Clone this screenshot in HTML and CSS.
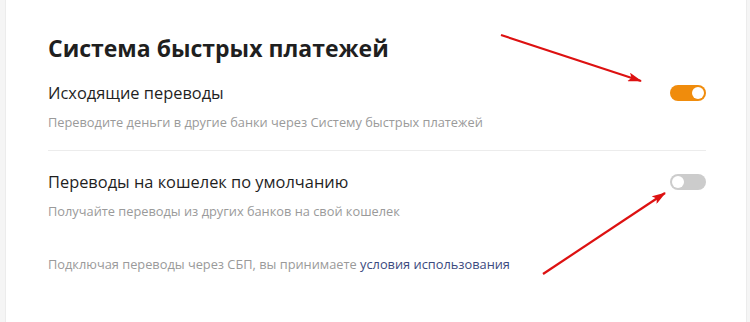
FILE: index.html
```html
<!DOCTYPE html>
<html lang="ru">
<head>
    <meta charset="UTF-8">
    <meta name="viewport" content="width=device-width, initial-scale=1.0">
    <title>Система быстрых платежей</title>
    <link rel="stylesheet" href="styles.css">
</head>
<body>
    <div class="card">
        <h1>Система быстрых платежей</h1>

        <div class="setting">
            <div class="setting-head">
                <span class="setting-title">Исходящие переводы</span>
                <span class="toggle on"><span class="knob"></span></span>
            </div>
            <p class="setting-note">Переводите деньги в другие банки через Систему быстрых платежей</p>
        </div>

        <div class="setting">
            <div class="setting-head">
                <span class="setting-title">Переводы на кошелек по умолчанию</span>
                <span class="toggle"><span class="knob"></span></span>
            </div>
            <p class="setting-note">Получайте переводы из других банков на свой кошелек</p>
        </div>

        <p class="terms">Подключая переводы через СБП, вы принимаете <a href="#">условия использования</a></p>

        <!-- red annotation arrows drawn over the screenshot -->
        <svg class="arrows" width="750" height="322" viewBox="0 0 750 322">
            <defs>
                <marker id="head" markerWidth="14" markerHeight="9" refX="13" refY="4.5" orient="auto" markerUnits="userSpaceOnUse">
                    <path d="M0,0 L14,4.5 L0,9 L3,4.5 Z" fill="#dd1111"/>
                </marker>
            </defs>
            <line x1="501" y1="35" x2="641" y2="81" stroke="#dd1111" stroke-width="2.2" marker-end="url(#head)"/>
            <line x1="543" y1="274" x2="665" y2="193" stroke="#dd1111" stroke-width="2.2" marker-end="url(#head)"/>
        </svg>
    </div>
</body>
</html>
```

FILE: styles.css
```css
:root {
    --text: #1f1f1f;
    --muted: #9a9a9a;
    --line: #ececec;
    --accent: #f08c0c;
    --link: #3b4a7e;
}

* {
    box-sizing: border-box;
}

body {
    margin: 0;
    height: 322px;
    overflow: hidden;
    background: #f5f5f5;
    font-family: 'Open Sans', Arial, sans-serif;
    color: var(--text);
}

.card {
    position: relative;
    margin-left: 5px;
    width: 742px;
    height: 322px;
    padding: 33px 40px 0 42px;
    background: #fff;
    border-left: 1px solid var(--line);
    border-right: 1px solid var(--line);
}

h1 {
    margin: 0 0 18px;
    font-size: 23px;
    line-height: 30px;
    font-weight: 700;
}

.setting {
    padding-bottom: 19px;
}

.setting + .setting {
    border-top: 1px solid var(--line);
    padding-top: 19px;
}

.setting-head {
    display: flex;
    align-items: center;
    justify-content: space-between;
    height: 24px;
}

.setting-title {
    font-size: 16.4px;
    line-height: 24px;
}

.setting-note {
    margin: 8px 0 0;
    font-size: 12.8px;
    line-height: 18px;
    color: var(--muted);
}

.toggle {
    display: flex;
    align-items: center;
    width: 36px;
    height: 16px;
    padding: 2px;
    border-radius: 8px;
    background: #cccccc;
}

.toggle .knob {
    width: 12px;
    height: 12px;
    border-radius: 50%;
    background: #fff;
}

.toggle.on {
    justify-content: flex-end;
    background: var(--accent);
}

.terms {
    margin: 16px 0 0;
    font-size: 12.8px;
    line-height: 18px;
    color: var(--muted);
}

.terms a {
    color: var(--link);
    text-decoration: none;
}

.arrows {
    position: absolute;
    left: -6px;
    top: 0;
    pointer-events: none;
}
```
